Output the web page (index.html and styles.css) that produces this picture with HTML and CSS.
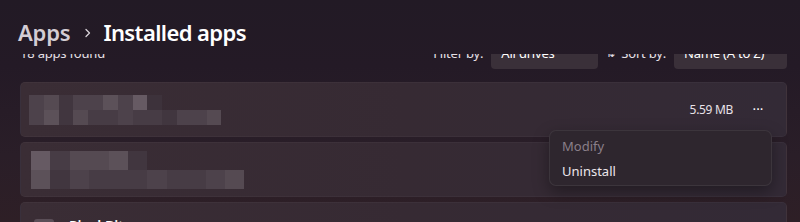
FILE: index.html
```html
<!DOCTYPE html>
<html>
<head>
<meta charset="utf-8">
<link rel="stylesheet" href="styles.css">
</head>
<body>
<div class="page">
  <header class="header">
    <span class="crumb">Apps</span>
    <svg class="chev" width="12" height="12" viewBox="0 0 12 12"><path d="M4 2.5 L7.5 6 L4 9.5" fill="none" stroke="#d8d2d8" stroke-width="1.3" stroke-linecap="round" stroke-linejoin="round"/></svg>
    <span class="title">Installed apps</span>
  </header>
  <div class="scroller">
    <div class="content">
      <div class="toolbar">
        <span class="count">18 apps found</span>
        <div class="filters">
          <span class="label">Filter by:</span>
          <div class="drop drop-filter">All drives</div>
          <span class="sorticon">⇅</span>
          <span class="label">Sort by:</span>
          <div class="drop drop-sort">Name (A to Z)</div>
        </div>
      </div>
      <div class="card">
        <div class="mosaic m1">
          <div class="row">
            <i class="s3"></i><i class="s4"></i><i class="s1"></i><i class="s3"></i><i class="s3"></i><i class="s5"></i><i class="s3"></i><i class="s6"></i><i class="s0"></i>
          </div>
          <div class="row">
            <i class="s3"></i><i class="s5"></i><i class="s1"></i><i class="s4"></i><i class="s2"></i><i class="s2"></i><i class="s3"></i><i class="s2"></i><i class="s2"></i><i class="s1"></i><i class="s3"></i><i class="s3"></i><i class="s4"></i>
          </div>
        </div>
        <div class="right">
          <span class="size">5.59 MB</span>
          <span class="more">•••</span>
        </div>
      </div>
      <div class="card">
        <div class="mosaic m2">
          <div class="row">
            <i class="s6"></i><i class="s2"></i><i class="s4"></i><i class="s4"></i><i class="s5"></i><i class="s1"></i>
          </div>
          <div class="row">
            <i class="s5"></i><i class="s1"></i><i class="s3"></i><i class="s2"></i><i class="s2"></i><i class="s2"></i><i class="s3"></i><i class="s2"></i><i class="s2"></i><i class="s3"></i><i class="s4"></i>
          </div>
        </div>
      </div>
      <div class="card card3">
        <span class="appicon"></span>
        <span class="appname">Pixel Bit</span>
      </div>
    </div>
  </div>
  <div class="menu">
    <div class="item disabled">Modify</div>
    <div class="item">Uninstall</div>
  </div>
</div>
</body>
</html>
```

FILE: styles.css
```css
* { box-sizing: border-box; }
html, body { margin: 0; padding: 0; }
body {
  width: 800px;
  height: 222px;
  overflow: hidden;
  font-family: "Noto Sans", "Open Sans", sans-serif;
  color: #ffffff;
}
.page {
  position: relative;
  width: 800px;
  height: 222px;
  background:
    linear-gradient(180deg, #221a25 0%, #241a26 30%, #2a1e28 70%, #2e1f26 100%);
}
.header {
  height: 54px;
  display: flex;
  align-items: center;
  padding: 10px 0 0 18px;
}
.crumb {
  font-size: 22px;
  font-weight: 600;
  color: #d4cdd4;
  letter-spacing: -0.2px;
}
.chev { margin: 2px 9px 0 12px; }
.title {
  font-size: 22px;
  font-weight: 600;
  color: #ffffff;
  letter-spacing: -0.6px;
}
.scroller {
  height: 168px;
  overflow: hidden;
}
.content {
  margin-top: -21px;
  padding: 0 13px 0 20px;
  display: flex;
  flex-direction: column;
  gap: 5px;
}
.toolbar {
  height: 36px;
  display: flex;
  align-items: flex-start;
  justify-content: space-between;
  font-size: 13px;
  color: #e6e0e6;
  margin-bottom: 8px;
}
.count { line-height: 32px; padding-top: 4px; letter-spacing: -0.2px; }
.filters {
  display: flex;
  align-items: flex-start;
  line-height: 32px;
}
.label { margin-right: 8px; padding-top: 4px; letter-spacing: -0.2px; }
.drop {
  height: 36px;
  border-radius: 4px;
  background: #3a3039;
  padding: 4px 0 0 10px;
  color: #ffffff;
  letter-spacing: -0.2px;
}
.drop-filter { width: 107px; margin-right: 8px; }
.drop-sort { width: 113px; }
.sorticon { margin-right: 6px; padding-top: 4px; font-size: 11px; }
.card {
  height: 55px;
  border-radius: 5px;
  background: linear-gradient(90deg, #3a2d35 0%, #362a33 50%, #332a36 100%);
  border: 1px solid rgba(255,255,255,0.03);
  display: flex;
  align-items: center;
  justify-content: space-between;
  padding: 0 22px 0 8px;
}
.mosaic { display: flex; flex-direction: column; }
.row { display: flex; }
.mosaic i { display: block; }
.m1 i { width: 14.8px; height: 15px; }
.m2 { margin-left: 2px; }
.m2 i { width: 19.4px; height: 19px; }
.s0 { background: #3d323b; }
.s1 { background: #41363f; }
.s2 { background: #473c45; }
.s3 { background: #4d424b; }
.s4 { background: #554a52; }
.s5 { background: #5c5159; }
.s6 { background: #665a63; }
.right {
  display: flex;
  align-items: center;
  gap: 20px;
}
.size { font-size: 12px; color: #e8e2e8; letter-spacing: -0.3px; }
.more { font-size: 7px; letter-spacing: 1px; color: #ffffff; }
.card3 {
  align-items: flex-start;
  justify-content: flex-start;
  padding: 13px 0 0 13px;
}
.appicon {
  width: 20px;
  height: 20px;
  margin-top: 3px;
  border-radius: 3px;
  background: #5a4e57;
}
.appname {
  margin-left: 15px;
  font-size: 14px;
  font-weight: 600;
  color: #ffffff;
}
.menu {
  position: absolute;
  left: 549px;
  top: 130px;
  width: 223px;
  height: 56px;
  border-radius: 7px;
  background: #2e262e;
  border: 1px solid rgba(255,255,255,0.07);
  box-shadow: 0 6px 16px rgba(0,0,0,0.35);
  padding: 3px 0;
  display: flex;
  flex-direction: column;
}
.item {
  height: 25px;
  line-height: 25px;
  padding-left: 12px;
  font-size: 13px;
  color: #ece7ec;
}
.item.disabled { color: #8a7f89; }
```
